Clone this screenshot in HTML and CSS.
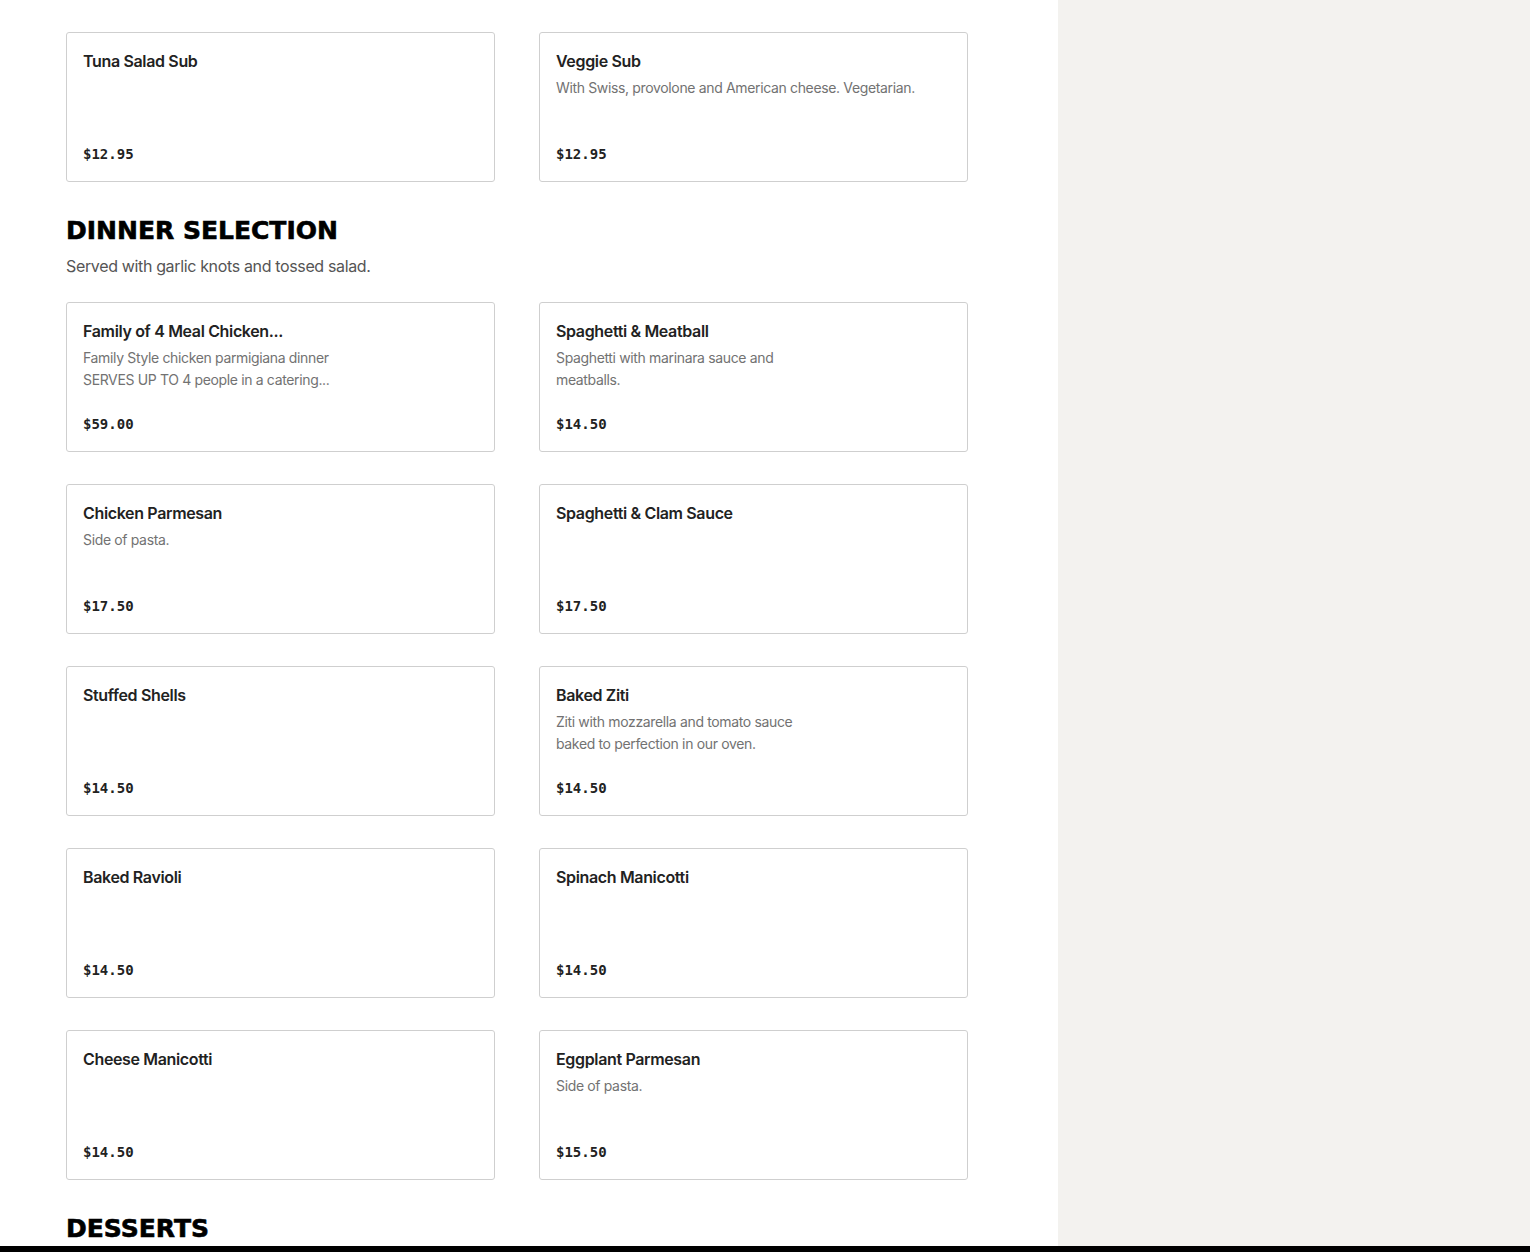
FILE: index.html
```html
<!DOCTYPE html>
<html lang="en">
<head>
    <meta charset="UTF-8">
    <meta name="viewport" content="width=device-width, initial-scale=1.0">
    <title>Menu</title>
    <link rel="stylesheet" href="styles.css">
</head>
<body>
    <div class="page">
        <div class="layout">
            <main class="menu">
                <!-- tail of the subs section -->
                <div class="item-grid">
                    <div class="item">
                        <div class="item-name">Tuna Salad Sub</div>
                        <div class="item-price">$12.95</div>
                    </div>
                    <div class="item">
                        <div class="item-name">Veggie Sub</div>
                        <div class="item-desc">With Swiss, provolone and American cheese. Vegetarian.</div>
                        <div class="item-price">$12.95</div>
                    </div>
                </div>

                <section class="category">
                    <h2 class="category-title">Dinner Selection</h2>
                    <p class="category-desc">Served with garlic knots and tossed salad.</p>
                    <div class="item-grid">
                        <div class="item">
                            <div class="item-name">Family of 4 Meal Chicken...</div>
                            <div class="item-desc narrow">Family Style chicken parmigiana dinner SERVES UP TO 4 people in a catering...</div>
                            <div class="item-price">$59.00</div>
                        </div>
                        <div class="item">
                            <div class="item-name">Spaghetti &amp; Meatball</div>
                            <div class="item-desc narrow">Spaghetti with marinara sauce and meatballs.</div>
                            <div class="item-price">$14.50</div>
                        </div>
                        <div class="item">
                            <div class="item-name">Chicken Parmesan</div>
                            <div class="item-desc">Side of pasta.</div>
                            <div class="item-price">$17.50</div>
                        </div>
                        <div class="item">
                            <div class="item-name">Spaghetti &amp; Clam Sauce</div>
                            <div class="item-price">$17.50</div>
                        </div>
                        <div class="item">
                            <div class="item-name">Stuffed Shells</div>
                            <div class="item-price">$14.50</div>
                        </div>
                        <div class="item">
                            <div class="item-name">Baked Ziti</div>
                            <div class="item-desc narrow">Ziti with mozzarella and tomato sauce baked to perfection in our oven.</div>
                            <div class="item-price">$14.50</div>
                        </div>
                        <div class="item">
                            <div class="item-name">Baked Ravioli</div>
                            <div class="item-price">$14.50</div>
                        </div>
                        <div class="item">
                            <div class="item-name">Spinach Manicotti</div>
                            <div class="item-price">$14.50</div>
                        </div>
                        <div class="item">
                            <div class="item-name">Cheese Manicotti</div>
                            <div class="item-price">$14.50</div>
                        </div>
                        <div class="item">
                            <div class="item-name">Eggplant Parmesan</div>
                            <div class="item-desc">Side of pasta.</div>
                            <div class="item-price">$15.50</div>
                        </div>
                    </div>
                </section>

                <section class="category">
                    <h2 class="category-title">Desserts</h2>
                </section>
            </main>
            <aside class="sidebar"></aside>
        </div>
        <div class="bottom-bar"></div>
    </div>
</body>
</html>
```

FILE: styles.css
```css
* {
    box-sizing: border-box;
}
body {
    margin: 0;
    font-family: Inter, "Noto Sans", sans-serif;
    letter-spacing: -0.35px;
    color: #1f1f1f;
    background-color: #fff;
}
.page {
    height: 100vh;
    display: flex;
    flex-direction: column;
    overflow: hidden;
}
.layout {
    flex: 1;
    display: flex;
    min-height: 0;
}
.menu {
    width: 1058px;
    padding: 32px 90px 0 66px;
    overflow: hidden;
}
.sidebar {
    flex: 1;
    background-color: #f3f2ef;
}
.bottom-bar {
    height: 6px;
    background-color: #000;
}
.item-grid {
    display: grid;
    grid-template-columns: repeat(2, 429px);
    column-gap: 44px;
    row-gap: 32px;
}
.item {
    height: 150px;
    display: flex;
    flex-direction: column;
    padding: 16px 16px 15px;
    border: 1px solid #cfcfcf;
    border-radius: 3px;
}
.item-name {
    font-size: 16px;
    line-height: 24px;
    font-weight: 600;
    color: #222;
}
.item-desc {
    margin-top: 4px;
    font-size: 14px;
    line-height: 22px;
    color: #727272;
}
.item-desc.narrow {
    max-width: 255px;
}
.item-price {
    margin-top: auto;
    font-family: "DejaVu Sans Mono", monospace;
    font-size: 14px;
    line-height: 24px;
    font-weight: bold;
    letter-spacing: 0;
    color: #222;
}
.category-title {
    margin: 32px 0 0;
    font-family: "DejaVu Sans", sans-serif;
    font-size: 25px;
    line-height: 34px;
    font-weight: 900;
    letter-spacing: 0;
    -webkit-text-stroke: 0.6px #000;
    text-transform: uppercase;
    color: #000;
}
.category-desc {
    margin: 6px 0 24px;
    font-size: 16px;
    line-height: 24px;
    color: #555;
}
```
